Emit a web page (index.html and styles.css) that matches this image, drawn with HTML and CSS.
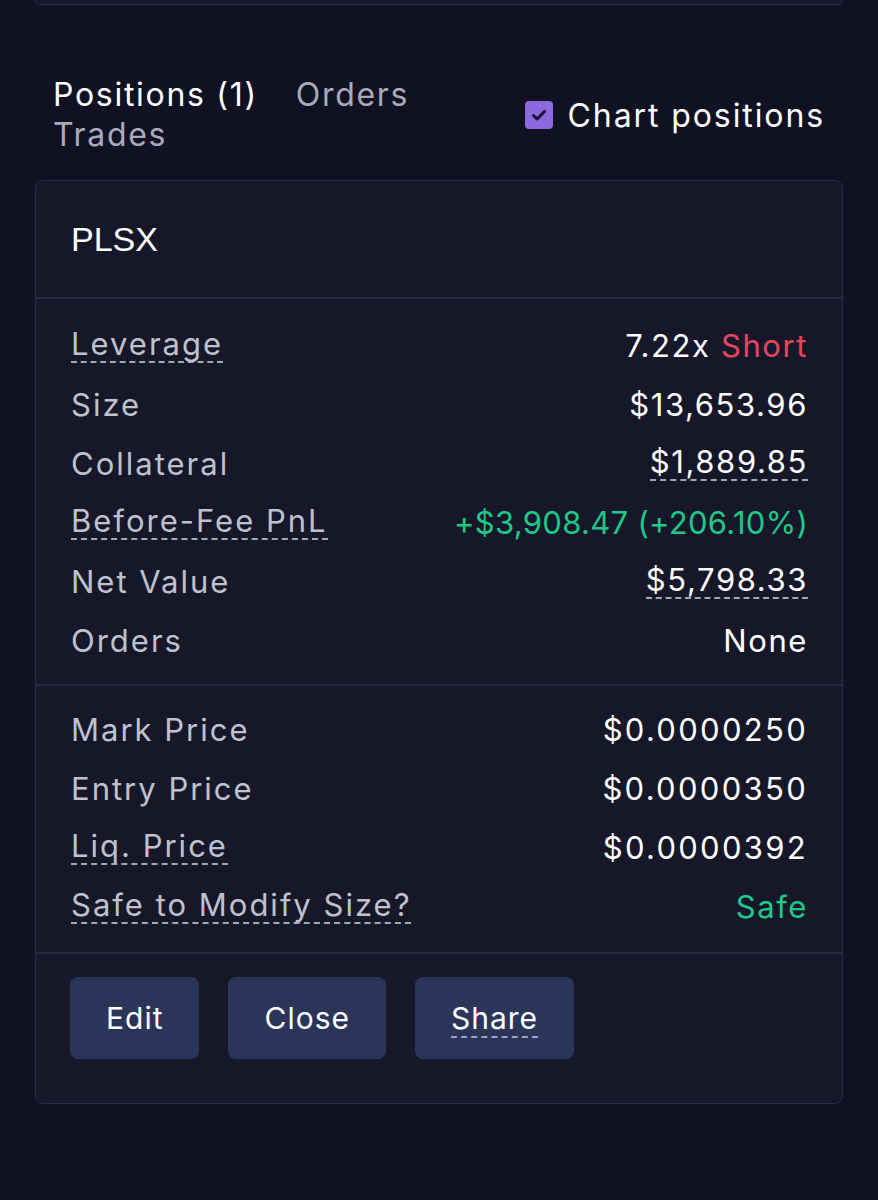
FILE: index.html
```html
<!DOCTYPE html>
<html lang="en">
<head>
    <meta charset="UTF-8">
    <meta name="viewport" content="width=device-width, initial-scale=1.0">
    <title>Positions</title>
    <link rel="stylesheet" href="styles.css">
</head>
<body>
    <div class="page">
        <div class="prev-card"></div>

        <div class="tabs-row">
            <div class="tabs">
                <span class="tab active">Positions (1)</span>
                <span class="tab">Orders</span>
                <span class="tab">Trades</span>
            </div>
            <label class="chart-toggle">
                <span class="checkbox">
                    <svg width="22" height="22" viewBox="0 0 20 20"><path d="M5 10.5 L8.3 13.6 L15 6.8" fill="none" stroke="#1b1433" stroke-width="2.8" stroke-linecap="round" stroke-linejoin="round"/></svg>
                </span>
                Chart positions
            </label>
        </div>

        <div class="card">
            <div class="card-header">PLSX</div>

            <div class="card-section">
                <div class="row">
                    <span class="label dashed">Leverage</span>
                    <span class="value">7.22x <span class="red">Short</span></span>
                </div>
                <div class="row">
                    <span class="label">Size</span>
                    <span class="value">$13,653.96</span>
                </div>
                <div class="row">
                    <span class="label">Collateral</span>
                    <span class="value dashed">$1,889.85</span>
                </div>
                <div class="row">
                    <span class="label dashed">Before-Fee PnL</span>
                    <span class="value green pnl">+$3,908.47 (+206.10%)</span>
                </div>
                <div class="row">
                    <span class="label">Net Value</span>
                    <span class="value dashed">$5,798.33</span>
                </div>
                <div class="row">
                    <span class="label">Orders</span>
                    <span class="value">None</span>
                </div>
            </div>

            <div class="card-section second">
                <div class="row">
                    <span class="label">Mark Price</span>
                    <span class="value price">$0.0000250</span>
                </div>
                <div class="row">
                    <span class="label">Entry Price</span>
                    <span class="value price">$0.0000350</span>
                </div>
                <div class="row">
                    <span class="label dashed">Liq. Price</span>
                    <span class="value price">$0.0000392</span>
                </div>
                <div class="row">
                    <span class="label dashed">Safe to Modify Size?</span>
                    <span class="value green">Safe</span>
                </div>
            </div>

            <div class="card-actions">
                <button>Edit</button>
                <button>Close</button>
                <button><span class="dashed">Share</span></button>
            </div>
        </div>
    </div>
</body>
</html>
```

FILE: styles.css
```css
body {
    margin: 0;
    background: #101123;
    font-family: 'Inter', 'Roboto', sans-serif;
    color: #ffffff;
}
.page {
    padding: 0 35px;
}
.prev-card {
    height: 4px;
    background: #161829;
    border: 1px solid #2a2c42;
    border-top: none;
    border-radius: 0 0 8px 8px;
}
.tabs-row {
    display: flex;
    align-items: center;
    justify-content: space-between;
    margin-top: 70px;
    margin-bottom: 25px;
    padding: 0 18px 0 18px;
}
.tabs {
    display: flex;
    flex-wrap: wrap;
    column-gap: 38px;
    max-width: 420px;
    font-size: 32px;
    line-height: 40px;
    letter-spacing: 1.7px;
}
.tab {
    color: #a9abbb;
}
.tab.active {
    color: #ffffff;
}
.chart-toggle {
    display: flex;
    align-items: center;
    gap: 15px;
    font-size: 32px;
    letter-spacing: 1.9px;
}
.checkbox {
    display: flex;
    align-items: center;
    justify-content: center;
    width: 28px;
    height: 28px;
    border-radius: 4px;
    background: #8b6ae0;
}
.card {
    background: #161829;
    border: 1px solid #2a2c42;
    border-radius: 8px;
}
.card-header {
    height: 116px;
    display: flex;
    align-items: center;
    padding: 0 35px;
    font-family: 'Liberation Sans', Arial, sans-serif;
    font-size: 34px;
    border-bottom: 2px solid #262840;
}
.card-section {
    padding: 17px 34px 14px 35px;
    border-bottom: 2px solid #262840;
}
.card-section.second {
    padding-top: 14px;
    padding-bottom: 16px;
}
.row {
    display: flex;
    justify-content: space-between;
    align-items: center;
    height: 59px;
    font-size: 31px;
}
.label {
    color: #bfc1cd;
    letter-spacing: 2px;
}
.value {
    color: #ffffff;
    letter-spacing: 1.6px;
}
.value.price {
    letter-spacing: 2.3px;
}
.value.pnl {
    letter-spacing: 0.3px;
}
.dashed {
    border-bottom: 2px dashed #a5a7b8;
    line-height: 1.05;
}
.green {
    color: #1ec888;
}
.red {
    color: #e8455f;
}
.card-actions {
    display: flex;
    gap: 29px;
    padding: 23px 34px 44px;
}
button {
    height: 82px;
    padding: 0 36px;
    border: none;
    border-radius: 8px;
    background: #2b3559;
    color: #ffffff;
    font-family: 'Inter', 'Roboto', sans-serif;
    font-size: 30px;
    letter-spacing: 1px;
}
button .dashed {
    border-bottom-color: #9aa3c4;
}
```
